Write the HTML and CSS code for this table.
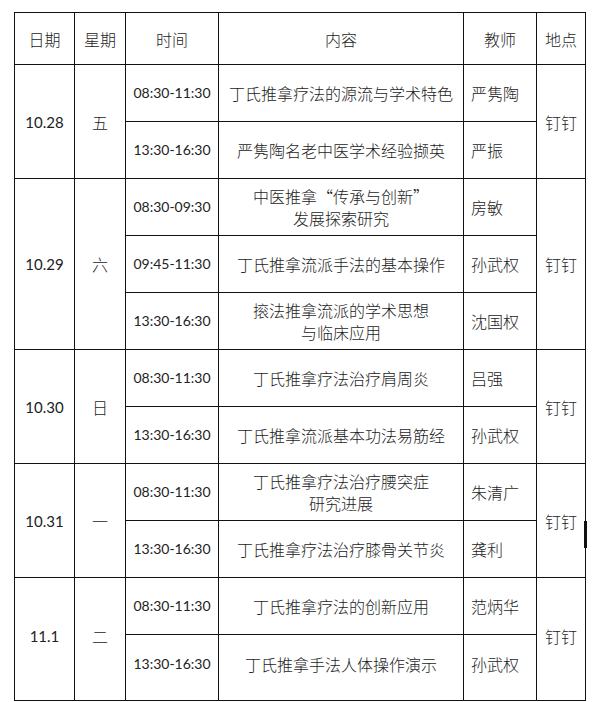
FILE: index.html
```html
<!DOCTYPE html>
<html lang="zh">
<head>
<meta charset="utf-8">
<link rel="stylesheet" href="styles.css">
</head>
<body>
<div class="page">
  <table class="sched">
    <colgroup>
      <col class="c-date"><col class="c-week"><col class="c-time"><col class="c-content"><col class="c-teacher"><col class="c-place">
    </colgroup>
    <thead>
      <tr class="head">
        <th>日期</th><th>星期</th><th>时间</th><th>内容</th><th>教师</th><th>地点</th>
      </tr>
    </thead>
    <tbody>
      <tr class="r">
        <td rowspan="2" class="num">10.28</td>
        <td rowspan="2" class="wk">五</td>
        <td class="time">08:30-11:30</td>
        <td class="content">丁氏推拿疗法的源流与学术特色</td>
        <td class="teacher">严隽陶</td>
        <td rowspan="2" class="place">钉钉</td>
      </tr>
      <tr class="r">
        <td class="time">13:30-16:30</td>
        <td class="content">严隽陶名老中医学术经验撷英</td>
        <td class="teacher">严振</td>
      </tr>

      <tr class="r">
        <td rowspan="3" class="num">10.29</td>
        <td rowspan="3" class="wk">六</td>
        <td class="time">08:30-09:30</td>
        <td class="content two">中医推拿“传承与创新”<br>发展探索研究</td>
        <td class="teacher">房敏</td>
        <td rowspan="3" class="place">钉钉</td>
      </tr>
      <tr class="r">
        <td class="time">09:45-11:30</td>
        <td class="content">丁氏推拿流派手法的基本操作</td>
        <td class="teacher">孙武权</td>
      </tr>
      <tr class="r">
        <td class="time">13:30-16:30</td>
        <td class="content two">㨰法推拿流派的学术思想<br>与临床应用</td>
        <td class="teacher">沈国权</td>
      </tr>

      <tr class="r">
        <td rowspan="2" class="num">10.30</td>
        <td rowspan="2" class="wk">日</td>
        <td class="time">08:30-11:30</td>
        <td class="content">丁氏推拿疗法治疗肩周炎</td>
        <td class="teacher">吕强</td>
        <td rowspan="2" class="place">钉钉</td>
      </tr>
      <tr class="r">
        <td class="time">13:30-16:30</td>
        <td class="content">丁氏推拿流派基本功法易筋经</td>
        <td class="teacher">孙武权</td>
      </tr>

      <tr class="r">
        <td rowspan="2" class="num">10.31</td>
        <td rowspan="2" class="wk">一</td>
        <td class="time">08:30-11:30</td>
        <td class="content two">丁氏推拿疗法治疗腰突症<br>研究进展</td>
        <td class="teacher">朱清广</td>
        <td rowspan="2" class="place">钉钉</td>
      </tr>
      <tr class="r">
        <td class="time">13:30-16:30</td>
        <td class="content">丁氏推拿疗法治疗膝骨关节炎</td>
        <td class="teacher">龚利</td>
      </tr>

      <tr class="r">
        <td rowspan="2" class="num lastgrp">11.1</td>
        <td rowspan="2" class="wk lastgrp">二</td>
        <td class="time">08:30-11:30</td>
        <td class="content">丁氏推拿疗法的创新应用</td>
        <td class="teacher">范炳华</td>
        <td rowspan="2" class="place lastgrp">钉钉</td>
      </tr>
      <tr class="r last2">
        <td class="time">13:30-16:30</td>
        <td class="content">丁氏推拿手法人体操作演示</td>
        <td class="teacher">孙武权</td>
      </tr>
    </tbody>
  </table>
  <div class="edge-mark"></div>
</div>
</body>
</html>
```
FILE: styles.css
```css
html, body {
  margin: 0;
  padding: 0;
  background: #ffffff;
}
.page {
  position: relative;
  width: 600px;
  height: 702px;
  padding: 12px 0 0 14px;
  box-sizing: border-box;
}
.sched {
  border-collapse: collapse;
  table-layout: fixed;
  width: 571px;
  font-family: "Noto Sans CJK SC", "Liberation Sans", sans-serif;
  font-size: 16px;
  font-weight: 300;
  color: #1c1c1c;
}
.c-date { width: 60px; }
.c-week { width: 51px; }
.c-time { width: 93px; }
.c-content { width: 245px; }
.c-teacher { width: 73px; }
.c-place { width: 49px; }
.sched th, .sched td {
  border: 1px solid #111;
  padding: 0;
  text-align: center;
  vertical-align: middle;
  font-weight: 300;
  line-height: 22px;
  overflow: hidden;
  white-space: nowrap;
}
.head { height: 52px; }
.r { height: 57px; }
.r.last2 { height: 66px; }
.r.last2 td { padding-bottom: 8px; }
.lastgrp { padding-bottom: 7px !important; }
.num, .time {
  font-family: Lato, "Open Sans", "Liberation Sans", sans-serif;
  font-weight: 400 !important;
  color: #222;
}
.num { font-size: 15px; }
.time { font-size: 14px; }
.content { font-size: 16px; }
.teacher {
  text-align: left !important;
  padding-left: 7px !important;
}
.edge-mark {
  position: absolute;
  left: 584px;
  top: 521px;
  width: 3px;
  height: 27px;
  background: #111;
}
```
